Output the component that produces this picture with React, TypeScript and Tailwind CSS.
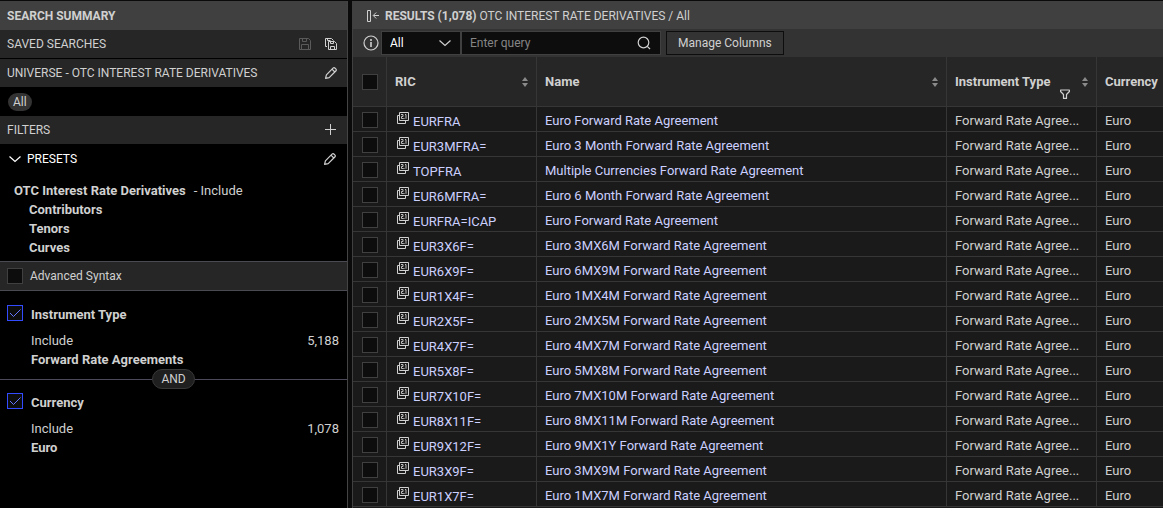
import { useState } from "react";
import type { ReactNode } from "react";

type Instrument = {
  ric: string;
  name: string;
};

const instruments: Instrument[] = [
  { ric: "EURFRA", name: "Euro Forward Rate Agreement" },
  { ric: "EUR3MFRA=", name: "Euro 3 Month Forward Rate Agreement" },
  { ric: "TOPFRA", name: "Multiple Currencies Forward Rate Agreement" },
  { ric: "EUR6MFRA=", name: "Euro 6 Month Forward Rate Agreement" },
  { ric: "EURFRA=ICAP", name: "Euro Forward Rate Agreement" },
  { ric: "EUR3X6F=", name: "Euro 3MX6M Forward Rate Agreement" },
  { ric: "EUR6X9F=", name: "Euro 6MX9M Forward Rate Agreement" },
  { ric: "EUR1X4F=", name: "Euro 1MX4M Forward Rate Agreement" },
  { ric: "EUR2X5F=", name: "Euro 2MX5M Forward Rate Agreement" },
  { ric: "EUR4X7F=", name: "Euro 4MX7M Forward Rate Agreement" },
  { ric: "EUR5X8F=", name: "Euro 5MX8M Forward Rate Agreement" },
  { ric: "EUR7X10F=", name: "Euro 7MX10M Forward Rate Agreement" },
  { ric: "EUR8X11F=", name: "Euro 8MX11M Forward Rate Agreement" },
  { ric: "EUR9X12F=", name: "Euro 9MX1Y Forward Rate Agreement" },
  { ric: "EUR3X9F=", name: "Euro 3MX9M Forward Rate Agreement" },
  { ric: "EUR1X7F=", name: "Euro 1MX7M Forward Rate Agreement" },
];

function SaveIcon() {
  return (
    <svg className="size-3" fill="none" stroke="currentColor" viewBox="0 0 12 12">
      <path d="M.5.5h9l2 2v9H.5zM3.5.5v3h4v-3M2.5 11.5v-5h7v5" />
    </svg>
  );
}

function SaveAsIcon() {
  return (
    <svg className="size-3" fill="none" stroke="currentColor" viewBox="0 0 12 12">
      <path d="M2 8.5H.5v-8h6l2 2M2.5.5v2h3" />
      <path d="M3.5 3.5h6l2 2v6h-8zM5.5 3.5v2h3v-2M5.5 11.5v-3h4v3" />
    </svg>
  );
}

function PencilIcon() {
  return (
    <svg
      className="size-3"
      fill="none"
      stroke="currentColor"
      strokeLinejoin="round"
      strokeWidth="1.2"
      viewBox="0 0 12 12"
    >
      <path d="M.6 11.4l.8-3.6L8 1.2a1.5 1.5 0 0 1 2.1 0l.7.7a1.5 1.5 0 0 1 0 2.1L4.2 10.6zM7 2.2L9.8 5" />
    </svg>
  );
}

function PlusIcon() {
  return (
    <svg className="size-3" fill="none" stroke="currentColor" viewBox="0 0 12 12">
      <path d="M5.5 0v11M0 5.5h11" />
    </svg>
  );
}

function ChevronIcon() {
  return (
    <svg className="h-2 w-3" fill="none" stroke="currentColor" strokeWidth="1.2" viewBox="0 0 12 8">
      <path d="M.5 1.5L6 6.5l5.5-5" />
    </svg>
  );
}

function CollapseIcon() {
  return (
    <svg className="h-3 w-3.5" fill="none" stroke="currentColor" viewBox="0 0 14 12">
      <path d="M.5.5h3v11h-3zM12 5.5H6.5M9.2 2.5l-3 3 3 3" />
    </svg>
  );
}

function InfoIcon() {
  return (
    <svg className="size-4" fill="none" stroke="currentColor" viewBox="0 0 16 16">
      <circle cx="8" cy="8" r="7" strokeWidth="1.2" />
      <path d="M8 7v5M8 4v2" strokeWidth="1.6" />
    </svg>
  );
}

function SearchIcon() {
  return (
    <svg className="size-3.5" fill="none" stroke="currentColor" strokeWidth="1.2" viewBox="0 0 14 14">
      <circle cx="6.5" cy="6.5" r="5.3" />
      <path d="M10.3 10.3L13 13" />
    </svg>
  );
}

function FunnelIcon() {
  return (
    <svg
      className="size-2.5"
      fill="none"
      stroke="currentColor"
      strokeLinejoin="round"
      strokeWidth="1.2"
      viewBox="0 0 10 10"
    >
      <path d="M.6 1h8.800v1.5l-2.900 3v3.900h-3V5.500L.6 2.500z" />
    </svg>
  );
}

function SortIcon() {
  return (
    <svg className="h-2.5 w-1.5 shrink-0 text-[#8a8a8a]" fill="currentColor" viewBox="0 0 6 10">
      <path d="M0 4l3-4 3 4zM0 6l3 4 3-4z" />
    </svg>
  );
}

function QuoteIcon() {
  return (
    <svg className="size-3" fill="none" stroke="currentColor" viewBox="0 0 12 12">
      <path d="M2.5.5h9v8h-9zM2 3.500H.5v8h8V9" />
      <path d="M4 2.500h2v2H4.500v2h2M9 6.800V2.500H8M7 6v1" strokeWidth=".9" />
    </svg>
  );
}

function Checkbox({ label, initial = false }: { label: string; initial?: boolean }) {
  const [checked, setChecked] = useState(initial);

  return (
    <span className="relative block size-4 shrink-0">
      <input
        aria-label={label}
        checked={checked}
        className="block size-4 appearance-none border border-[#404040] bg-[#0d0d0d] checked:border-[#334bff]"
        onChange={(event) => setChecked(event.target.checked)}
        type="checkbox"
      />
      {checked ? (
        <svg className="pointer-events-none absolute inset-0 size-4" fill="none" stroke="#6476ff" viewBox="0 0 16 16">
          <path d="M3 8l3.500 3.500 7-7" />
        </svg>
      ) : null}
    </span>
  );
}

function IconButton({ label, children, muted = false }: { label: string; children: ReactNode; muted?: boolean }) {
  return (
    <button aria-label={label} className={muted ? "text-[#5a5a5a]" : "text-[#d0d0d0]"} disabled={muted} type="button">
      {children}
    </button>
  );
}

function FilterGroup({ title, value, count }: { title: string; value: string; count: string }) {
  return (
    <section className="px-[7px]">
      <div className="flex h-5 items-start gap-2">
        <Checkbox initial label={title} />
        <h3 className="text-[13px] leading-5 font-bold">{title}</h3>
      </div>
      <div className="mt-1.5 flex justify-between pr-px pl-6 text-[13px] leading-[19px]">
        <span>Include</span>
        <span>{count}</span>
      </div>
      <p className="pl-6 text-[13px] leading-[19px] font-bold">{value}</p>
    </section>
  );
}

function SearchSummary() {
  return (
    <aside className="w-[348px] shrink-0 border-r border-[#444444] bg-black">
      <h1 className="flex h-[29px] items-center bg-[#404040] px-[7px] text-xs font-bold">SEARCH SUMMARY</h1>
      <div className="flex h-7 items-center justify-between bg-[#262626] pr-2.5 pl-[7px] text-xs">
        <h2>SAVED SEARCHES</h2>
        <div className="flex gap-3.5">
          <IconButton label="Save search" muted>
            <SaveIcon />
          </IconButton>
          <IconButton label="Save search as">
            <SaveAsIcon />
          </IconButton>
        </div>
      </div>
      <div className="mt-px flex h-7 items-center justify-between bg-[#262626] pr-2.5 pl-[7px] text-xs">
        <h2>UNIVERSE - OTC INTEREST RATE DERIVATIVES</h2>
        <IconButton label="Edit universe">
          <PencilIcon />
        </IconButton>
      </div>
      <div className="flex h-[29px] items-center px-2">
        <span className="rounded-full bg-[#333333] px-[5px] text-xs leading-[18px]">All</span>
      </div>
      <div className="flex h-7 items-center justify-between bg-[#262626] pr-2.5 pl-[7px] text-xs">
        <h2>FILTERS</h2>
        <IconButton label="Add filter">
          <PlusIcon />
        </IconButton>
      </div>
      <div className="flex h-[30px] items-center justify-between pr-[11px] pl-[9px]">
        <button className="flex items-center gap-1.5 text-xs text-white" type="button">
          <ChevronIcon />
          PRESETS
        </button>
        <IconButton label="Edit presets">
          <PencilIcon />
        </IconButton>
      </div>
      <div className="pt-[7px] pr-2 pb-1 pl-3.5 text-[13px] leading-[19px]">
        <p>
          <strong>OTC Interest Rate Derivatives</strong>
          <span className="ml-2">- Include</span>
        </p>
        <ul className="pl-[15px] font-bold">
          <li>Contributors</li>
          <li>Tenors</li>
          <li>Curves</li>
        </ul>
      </div>
      <div className="flex h-[30px] items-center gap-[7px] border-y border-[#4a4a52] bg-[#262626] px-[7px] text-xs">
        <Checkbox label="Advanced Syntax" />
        <span>Advanced Syntax</span>
      </div>
      <div className="pt-3.5">
        <FilterGroup count="5,188" title="Instrument Type" value="Forward Rate Agreements" />
        <div className="flex h-5 items-center">
          <div className="h-px flex-1 bg-[#4a4a5a]" />
          <span className="rounded-full border border-[#383838] bg-[#1f1f1f] px-2 text-xs leading-[18px]">AND</span>
          <div className="h-px flex-1 bg-[#4a4a5a]" />
        </div>
        <div className="pt-1">
          <FilterGroup count="1,078" title="Currency" value="Euro" />
        </div>
      </div>
    </aside>
  );
}

function ResultsTable() {
  return (
    <table className="w-full table-fixed border-separate border-spacing-0 text-left text-[13px] leading-5">
      <colgroup>
        <col className="w-[34px]" />
        <col className="w-[150px]" />
        <col className="w-[410px]" />
        <col className="w-[150px]" />
        <col />
      </colgroup>
      <thead>
        <tr className="h-[50px] bg-[#262626] [&>th]:border-b [&>th]:border-[#363636]">
          <th className="border-r pl-[9px]">
            <Checkbox label="Select all" />
          </th>
          <th className="border-r pr-2 pl-2">
            <div className="flex items-center justify-between">
              RIC
              <SortIcon />
            </div>
          </th>
          <th className="border-r pr-2 pl-2">
            <div className="flex items-center justify-between">
              Name
              <SortIcon />
            </div>
          </th>
          <th className="border-r pr-2 pl-2">
            <div className="relative flex items-center justify-between">
              Instrument Type
              <span className="absolute top-[17px] right-[18px]">
                <FunnelIcon />
              </span>
              <SortIcon />
            </div>
          </th>
          <th className="pl-2">Currency</th>
        </tr>
      </thead>
      <tbody>
        {instruments.map((item) => (
          <tr className="h-[25px] bg-[#1a1a1a] [&>td]:border-b [&>td]:border-[#363636]" key={item.ric}>
            <td className="border-r pt-0.5 pl-[9px]">
              <Checkbox label={`Select ${item.ric}`} />
            </td>
            <td className="border-r pl-2.5">
              <div className="flex h-6 gap-1">
                <span className="pt-[5px]">
                  <QuoteIcon />
                </span>
                <a className="pt-[5px] text-[#ccd0ff]" href="#quote">
                  {item.ric}
                </a>
              </div>
            </td>
            <td className="border-r pt-1 pl-2 whitespace-nowrap text-[#ccd0ff]">{item.name}</td>
            <td className="border-r pt-1 pl-2 whitespace-nowrap">Forward Rate Agree...</td>
            <td className="pt-1 pl-2">Euro</td>
          </tr>
        ))}
      </tbody>
    </table>
  );
}

function Results() {
  return (
    <main className="min-w-0 flex-1 overflow-hidden border-l border-[#404040] bg-[#1a1a1a]">
      <div className="flex h-7 items-center bg-[#404040] pt-0.5 pl-3.5 text-xs">
        <IconButton label="Collapse summary">
          <CollapseIcon />
        </IconButton>
        <h2 className="ml-1 font-bold">RESULTS (1,078)</h2>
        <span className="ml-[3px]">OTC INTEREST RATE DERIVATIVES / All</span>
      </div>
      <div className="flex h-7 items-center bg-[#333333] pl-2.5 text-xs">
        <IconButton label="Search help">
          <InfoIcon />
        </IconButton>
        <div className="relative ml-0.5">
          <select
            aria-label="Search scope"
            className="block h-6 w-20 appearance-none border border-[#404040] bg-[#0d0d0d] pl-2 text-white"
            defaultValue="All"
          >
            <option>All</option>
            <option>RIC</option>
            <option>Name</option>
          </select>
          <span className="pointer-events-none absolute top-2 right-2.5">
            <ChevronIcon />
          </span>
        </div>
        <div className="relative">
          <input
            aria-label="Query"
            className="block h-6 w-[200px] border border-[#404040] bg-[#0d0d0d] pr-8 pl-2 placeholder:text-[#858585]"
            placeholder="Enter query"
            type="text"
          />
          <button aria-label="Search" className="absolute top-[5px] right-2.5" type="button">
            <SearchIcon />
          </button>
        </div>
        <button className="ml-[5px] h-6 border border-[#0d0d0d] bg-[#333333] px-[11px] text-xs" type="button">
          Manage Columns
        </button>
      </div>
      <ResultsTable />
    </main>
  );
}

export default function App() {
  return (
    <div className="flex min-h-screen gap-1 bg-[#0a0a0a] pt-px font-['Roboto',sans-serif] text-[#d0d0d0]">
      <SearchSummary />
      <Results />
    </div>
  );
}
